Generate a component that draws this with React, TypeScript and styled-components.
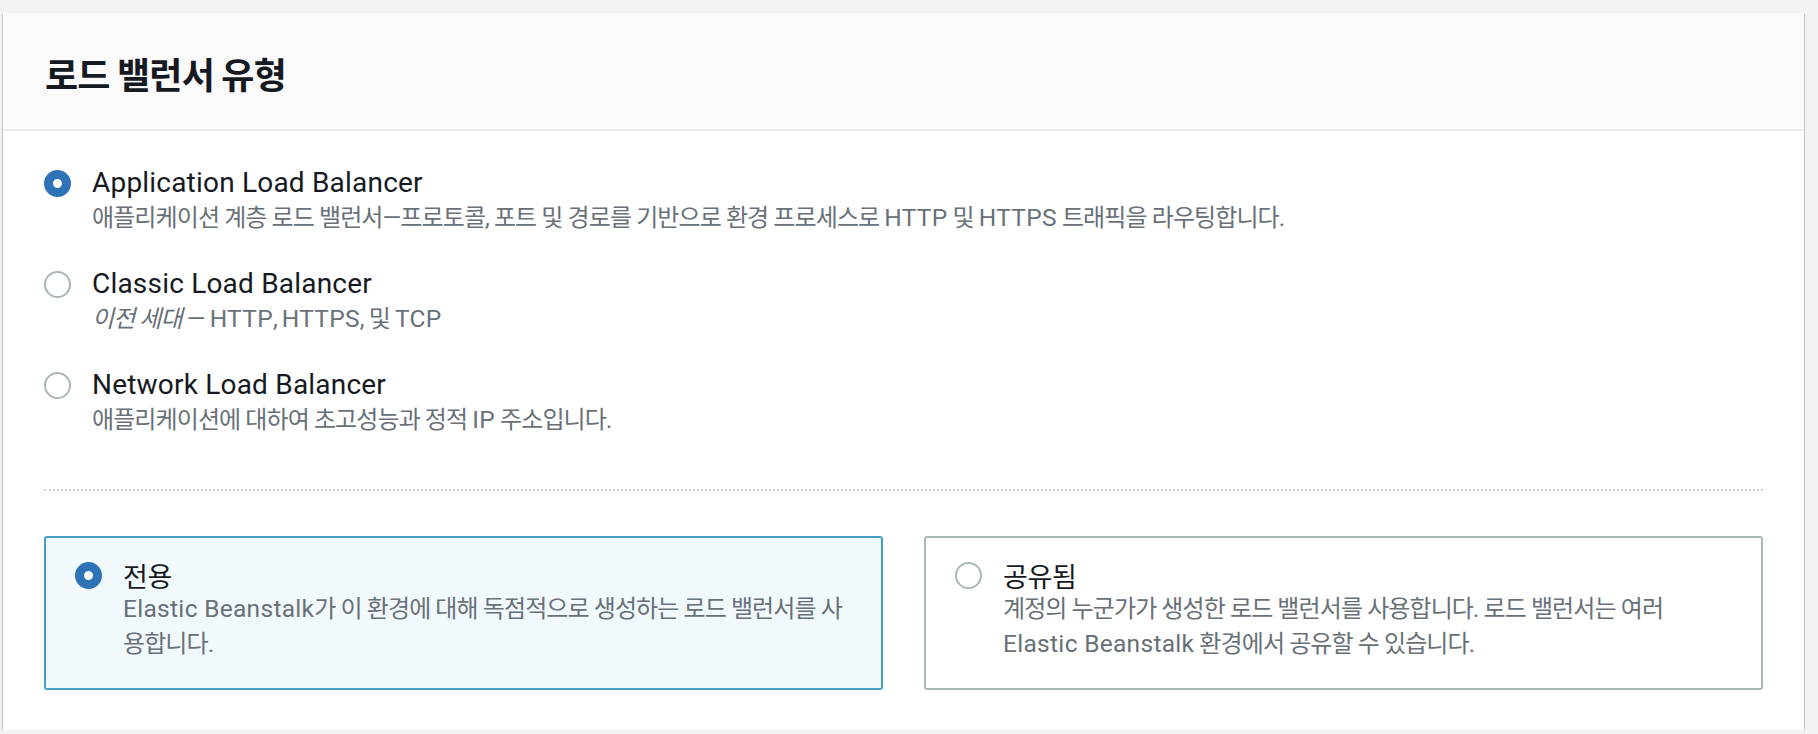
import React, { useState } from 'react';
import styled, { createGlobalStyle } from 'styled-components';

const GlobalStyle = createGlobalStyle`
  html, body {
    margin: 0;
    padding: 0;
    background: #f2f3f3;
  }

  body {
    font-family: Roboto, 'Noto Sans CJK KR', sans-serif;
    color: #16191f;
  }
`;

// latin product / protocol names keep their own spacing inside the korean text
const Term = styled.span`
  font-family: Roboto, sans-serif;
  font-size: 24.5px;
  line-height: 1;
  letter-spacing: 0.3px;
  white-space: nowrap;
`;

interface LbOption {
  key: string;
  label: string;
  description: React.ReactNode;
}

const LB_OPTIONS: LbOption[] = [
  {
    key: 'application',
    label: 'Application Load Balancer',
    description: <>애플리케이션 계층 로드 밸런서—프로토콜, 포트 및 경로를 기반으로 환경 프로세스로 <Term>HTTP</Term> 및 <Term>HTTPS</Term> 트래픽을 라우팅합니다.</>
  },
  {
    key: 'classic',
    label: 'Classic Load Balancer',
    description: <><em>이전 세대</em> — <Term>HTTP</Term>, <Term>HTTPS</Term>, 및 <Term>TCP</Term></>
  },
  {
    key: 'network',
    label: 'Network Load Balancer',
    description: <>애플리케이션에 대하여 초고성능과 정적 <Term>IP</Term> 주소입니다.</>
  }
];

const SCOPE_OPTIONS: LbOption[] = [
  {
    key: 'dedicated',
    label: '전용',
    description: <><Term>Elastic Beanstalk</Term>가 이 환경에 대해 독점적으로 생성하는 로드 밸런서를 사용합니다.</>
  },
  {
    key: 'shared',
    label: '공유됨',
    description: <>계정의 누군가가 생성한 로드 밸런서를 사용합니다. 로드 밸런서는 여러 <Term>Elastic Beanstalk</Term> 환경에서 공유할 수 있습니다.</>
  }
];

const Page = styled.div`
  padding: 13px 14px 0 3px;
`;

const Panel = styled.section`
  background: #ffffff;
  box-shadow: 0 1px 1px 0 rgba(0, 28, 36, 0.3), 1px 1px 1px 0 rgba(0, 28, 36, 0.15), -1px 1px 1px 0 rgba(0, 28, 36, 0.15);
`;

const PanelHeader = styled.header`
  background: #fafafa;
  border-bottom: 2px solid #eaeded;
  padding: 40px 42px 36px;
`;

const Title = styled.h2`
  margin: 0;
  font-family: 'Noto Sans CJK KR', sans-serif;
  font-size: 36px;
  line-height: 40px;
  font-weight: 700;
  letter-spacing: -0.8px;
  color: #16191f;
`;

const PanelBody = styled.div`
  padding: 34px 41px 40px;
`;

const OptionList = styled.div`
  display: flex;
  flex-direction: column;
  gap: 30px;
`;

const OptionRow = styled.label`
  display: flex;
  align-items: flex-start;
  gap: 21px;
  cursor: pointer;
`;

const RadioMark = styled.span<{ $checked: boolean }>`
  flex: none;
  box-sizing: border-box;
  width: 27px;
  height: 27px;
  margin-top: 5px;
  border-radius: 50%;
  background: #ffffff;
  border: ${({ $checked }) => ($checked ? '9px solid #2e73b8' : '2px solid #aab7b8')};
`;

const OptionText = styled.div`
  display: flex;
  flex-direction: column;
`;

const OptionLabel = styled.span`
  font-size: 28px;
  line-height: 36px;
  letter-spacing: 0.2px;
  color: #16191f;
`;

const OptionDescription = styled.span`
  font-size: 24px;
  line-height: 35px;
  letter-spacing: -0.9px;
  color: #687078;

  em {
    font-style: italic;
  }
`;

const Divider = styled.hr`
  margin: 51px 0 0;
  border: 0;
  border-top: 2px dotted #cfd4d4;
`;

const TileGrid = styled.div`
  margin-top: 45px;
  display: grid;
  grid-template-columns: 1fr 1fr;
  gap: 41px;
`;

const Tile = styled.label<{ $checked: boolean }>`
  display: flex;
  align-items: flex-start;
  gap: 21px;
  min-height: 154px;
  box-sizing: border-box;
  padding: 21px 30px 26px 29px;
  border-radius: 3px;
  border: 2px solid ${({ $checked }) => ($checked ? '#44a0c8' : '#aab7b8')};
  background: ${({ $checked }) => ($checked ? '#f1f9fd' : '#ffffff')};
  cursor: pointer;
`;

const TileLabel = styled.span`
  font-family: 'Noto Sans CJK KR', sans-serif;
  font-size: 27px;
  line-height: 33px;
  letter-spacing: -0.4px;
  color: #16191f;
`;

const TileRadio = styled(RadioMark)`
  margin-top: 3px;
`;

function App (): React.ReactElement {
  const [lbType, setLbType] = useState<string>('application');
  const [scope, setScope] = useState<string>('dedicated');

  return (
    <Page>
      <GlobalStyle />
      <Panel>
        <PanelHeader>
          <Title>로드 밸런서 유형</Title>
        </PanelHeader>
        <PanelBody>
          <OptionList>
            {LB_OPTIONS.map((option) => (
              <OptionRow
                key={option.key}
                onClick={() => setLbType(option.key)}
              >
                <RadioMark $checked={lbType === option.key} />
                <OptionText>
                  <OptionLabel>{option.label}</OptionLabel>
                  <OptionDescription>{option.description}</OptionDescription>
                </OptionText>
              </OptionRow>
            ))}
          </OptionList>

          <Divider />

          <TileGrid>
            {SCOPE_OPTIONS.map((option) => (
              <Tile
                $checked={scope === option.key}
                key={option.key}
                onClick={() => setScope(option.key)}
              >
                <TileRadio $checked={scope === option.key} />
                <OptionText>
                  <TileLabel>{option.label}</TileLabel>
                  <OptionDescription>{option.description}</OptionDescription>
                </OptionText>
              </Tile>
            ))}
          </TileGrid>
        </PanelBody>
      </Panel>
    </Page>
  );
}

export default App;
